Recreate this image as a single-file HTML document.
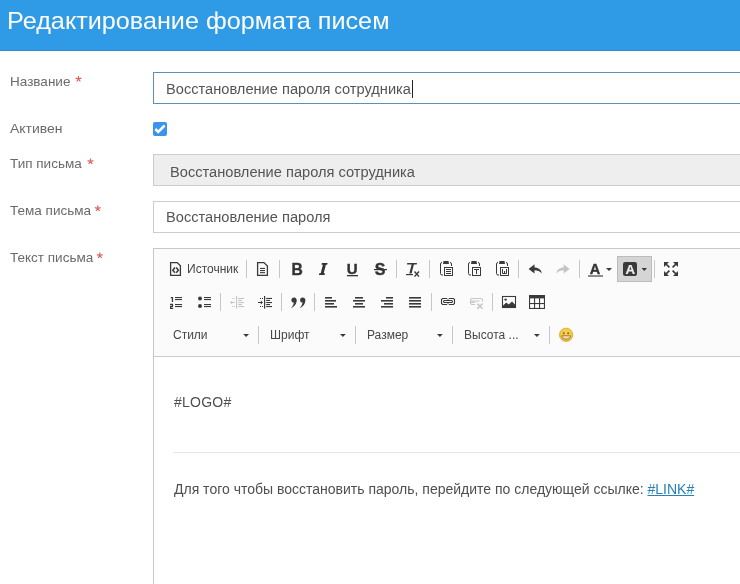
<!DOCTYPE html>
<html><head><meta charset="utf-8">
<style>
*{box-sizing:border-box;margin:0;padding:0}
html,body{width:740px;height:584px;overflow:hidden;background:#fff;font-family:"Liberation Sans",sans-serif}
.abs{position:absolute;will-change:transform}
#hdr{left:0;top:0;width:740px;height:50px;background:#2f9ae6}
#title{left:7px;top:6px;font-size:24px;color:#fff;white-space:nowrap;line-height:30px;transform:scaleX(1.05);transform-origin:0 0}
.lbl{left:10px;font-size:13px;color:#6a6a6a;white-space:nowrap;line-height:16px;transform:scaleX(1.04);transform-origin:0 0}
.ast{font-size:15px;color:#e05a5a;line-height:16px}
.inp{left:153px;width:600px;height:32px;border:1px solid #cccccc;background:#fff}
.itxt{font-size:14px;color:#555;white-space:nowrap;line-height:16px;transform:scaleX(1.045);transform-origin:0 0}
#ed{left:153px;top:248px;width:600px;height:340px;border:1px solid #c8c8c8;background:#fff}
#tb{left:0;top:0;width:600px;height:108px;background:#fbfbfb;border-bottom:1px solid #cbcbcb}
.tt{font-size:12px;color:#474747;white-space:nowrap;line-height:14px}
.ct{font-size:14px;color:#4f4f4f;white-space:nowrap;line-height:16px}
svg{position:absolute;left:0;top:0;will-change:transform}
</style></head><body>
<div id="hdr" class="abs"></div><div class="abs" style="left:0;top:50px;width:740px;height:1px;background:#4288bd"></div><div class="abs" style="left:0;top:51px;width:740px;height:1px;background:#eefcff"></div>
<div id="title" class="abs">Редактирование формата писем</div>

<div class="abs lbl" style="top:74px">Название</div>
<div class="abs lbl" style="top:121px;transform:scaleX(1.075)">Активен</div>
<div class="abs lbl" style="top:156px">Тип письма</div>
<div class="abs lbl" style="top:203px">Тема письма</div>
<div class="abs lbl" style="top:250px">Текст письма</div>

<div class="abs inp" style="top:72px;border-color:#5f8fb8"></div>
<div class="abs itxt" style="left:166px;top:81px">Восстановление пароля сотрудника</div>
<div class="abs" style="left:412px;top:80px;width:1px;height:18px;background:#222"></div>

<div class="abs" style="left:153px;top:122px;width:14px;height:14px;background:#3a93ec;border-radius:2px"></div>

<div class="abs inp" style="top:154px;background:#eeeeee"></div>
<div class="abs itxt" style="left:170px;top:164px">Восстановление пароля сотрудника</div>

<div class="abs inp" style="top:201px"></div>
<div class="abs itxt" style="left:166px;top:209px">Восстановление пароля</div>

<div id="ed" class="abs">
  <div id="tb" class="abs"></div>
</div>
<div class="abs tt" style="left:187px;top:262px">Источник</div>
<div class="abs tt" style="left:173px;top:328px">Стили</div>
<div class="abs tt" style="left:270px;top:328px">Шрифт</div>
<div class="abs tt" style="left:367px;top:328px">Размер</div>
<div class="abs tt" style="left:464px;top:328px">Высота ...</div>

<div class="abs ct" style="left:174px;top:394px;letter-spacing:0.25px">#LOGO#</div>
<div class="abs" style="left:174px;top:452px;width:570px;height:1px;background:#e6e6e6"></div>
<div class="abs ct" style="left:174px;top:481px">Для того чтобы восстановить пароль, перейдите по следующей ссылке: <span style="color:#2581b6;text-decoration:underline">#LINK#</span></div>

<svg width="740" height="584" viewBox="0 0 740 584">
<g fill="none" stroke="#df5f5f" stroke-width="1.2"><path d="M78.5,79 V76 M78.5,79 L75.6,78.1 M78.5,79 L81.4,78.1 M78.5,79 L76.7,81.5 M78.5,79 L80.3,81.5"/><path d="M90.5,161.5 V158.5 M90.5,161.5 L87.6,160.6 M90.5,161.5 L93.4,160.6 M90.5,161.5 L88.7,164.0 M90.5,161.5 L92.3,164.0"/><path d="M97.8,208.5 V205.5 M97.8,208.5 L94.89999999999999,207.6 M97.8,208.5 L100.7,207.6 M97.8,208.5 L96.0,211.0 M97.8,208.5 L99.6,211.0"/><path d="M99.8,255.5 V252.5 M99.8,255.5 L96.89999999999999,254.6 M99.8,255.5 L102.7,254.6 M99.8,255.5 L98.0,258.0 M99.8,255.5 L101.6,258.0"/></g>

<g fill="none" stroke="#3a3a3a" stroke-width="1.3">
<!-- source -->
<path d="M170.6,262.6 H177.2 L180.4,265.8 V275.4 H170.6 Z"/>
<path d="M175,267.6 L172.8,270.2 L175,272.8 M176.2,267.6 L178.4,270.2 L176.2,272.8" stroke-width="1.5"/>
<!-- doc -->
<path d="M257.6,262.6 H264 L267.4,266 V275.4 H257.6 Z"/>
</g>
<g fill="#3a3a3a">
<rect x="260" y="267.9" width="5" height="1.1"/>
<rect x="260" y="270" width="5" height="1.1"/>
<rect x="260" y="272.1" width="5" height="1.1"/>
</g>
<g fill="#333">
<text x="0" y="0" transform="translate(291.6,274.8) scale(0.9,1)" font-family="Liberation Sans" font-weight="bold" font-size="17.4" stroke="#333" stroke-width="0.45">B</text>
<path d="M321.9,263 H327.6 L327.2,264.7 H325.9 L323.7,273.3 H325 L324.6,275 H318.9 L319.3,273.3 H320.7 L322.9,264.7 H321.5 Z"/>
<text x="346.8" y="274" font-family="Liberation Sans" font-weight="bold" font-size="15" stroke="#333" stroke-width="0.4">U</text>
<rect x="347" y="275" width="11" height="1.3"/>
<text x="374.8" y="274.5" font-family="Liberation Sans" font-weight="bold" font-size="16" stroke="#333" stroke-width="0.4">S</text>
<rect x="374" y="269" width="13" height="1.2"/>
</g>
<!-- Tx -->
<g fill="#3a3a3a">
<path d="M407.2,263 H417 L416.7,264.6 H413.9 L411.6,273.6 H409.3 L411.6,264.6 H407 Z"/>
<rect x="406" y="274" width="7" height="1.2"/>
</g>
<path d="M414.5,271.5 L419,276.6 M419,271.5 L414.5,276.6" stroke="#3a3a3a" stroke-width="1.4"/>
<g transform="translate(0,0)" fill="none" stroke="#3a3a3a" stroke-width="1">
<path d="M442,262.5 Q440.5,262.5 440.5,264 V273.5 Q440.5,275 442,275 H443"/>
<path d="M450,262.5 Q451.5,262.5 451.5,264 V266"/>
<path d="M443.5,261 H448.5 L449,264 H443 Z" fill="#3a3a3a" stroke="none"/>
<rect x="444.5" y="267.5" width="8" height="8" fill="#fbfbfb"/>
<path d="M446,269.5 H451 M446,271.5 H451 M446,273.5 H451"/>
</g>
<g transform="translate(28,0)" fill="none" stroke="#3a3a3a" stroke-width="1">
<path d="M442,262.5 Q440.5,262.5 440.5,264 V273.5 Q440.5,275 442,275 H443"/>
<path d="M450,262.5 Q451.5,262.5 451.5,264 V266"/>
<path d="M443.5,261 H448.5 L449,264 H443 Z" fill="#3a3a3a" stroke="none"/>
<rect x="444.5" y="267.5" width="8" height="8" fill="#fbfbfb"/>
<path d="M446,269.5 H451 M448.5,269.5 V274"/>
</g>
<g transform="translate(56,0)" fill="none" stroke="#3a3a3a" stroke-width="1">
<path d="M442,262.5 Q440.5,262.5 440.5,264 V273.5 Q440.5,275 442,275 H443"/>
<path d="M450,262.5 Q451.5,262.5 451.5,264 V266"/>
<path d="M443.5,261 H448.5 L449,264 H443 Z" fill="#3a3a3a" stroke="none"/>
<rect x="444.5" y="267.5" width="8" height="8" fill="#fbfbfb"/>
<path d="M446.5,269 V273.5 H450.5 V269 M448.5,271 V273.5"/>
</g>
<!-- undo redo -->
<path d="M528.6,268.9 L534.5,264.2 L534.5,267.4 C538.5,267.4 541.5,269.8 541.8,273.4 C540,271.2 537.5,270.2 534.5,270.2 L534.5,273.6 Z" fill="#3a3a3a"/>
<path d="M569.6,268.9 L563.7,264.2 L563.7,267.4 C559.7,267.4 556.7,269.8 556.4,273.4 C558.2,271.2 560.7,270.2 563.7,270.2 L563.7,273.6 Z" fill="#c4c4c4"/>
<!-- text color -->
<text x="589.8" y="273.5" font-family="Liberation Sans" font-weight="bold" font-size="14.5" fill="#333" stroke="#333" stroke-width="0.35">A</text>
<rect x="588" y="275" width="15" height="2" fill="#8c8c8c"/>
<path d="M606,268 H612 L609,271 Z" fill="#3a3a3a"/>
<!-- bg color -->
<rect x="617.5" y="256.5" width="34" height="25" fill="#d5d5d5" stroke="#bcbcbc"/>
<rect x="623" y="262" width="14" height="14" rx="2.2" fill="#3a3a3a"/>
<text x="625.4" y="273.6" font-family="Liberation Sans" font-weight="bold" font-size="13.3" fill="#eee" stroke="#eee" stroke-width="0.2">A</text>
<path d="M641.5,268 H647 L644.25,271 Z" fill="#3a3a3a"/>
<!-- maximize -->
<g fill="#3a3a3a">
<path d="M664,262 H669 L664,267 Z"/><path d="M678,262 H673 L678,267 Z"/>
<path d="M664,276 H669 L664,271 Z"/><path d="M678,276 H673 L678,271 Z"/>
</g>
<path d="M665.5,263.5 L669.4,267.4 M676.5,263.5 L672.6,267.4 M665.5,274.5 L669.4,270.6 M676.5,274.5 L672.6,270.6" stroke="#3a3a3a" stroke-width="1.7"/>
<!-- row2: numbered list -->
<g fill="#3a3a3a">
<rect x="170.8" y="297" width="2.2" height="1.2"/><rect x="171.8" y="297" width="1.3" height="5"/>
<path d="M170,303.8 H173.1 V306.9 H171.3 V307.7 H173.2 V309 H170 V305.7 H171.8 V305.1 H170 Z"/>
<rect x="175" y="297" width="7" height="1.1"/><rect x="175" y="299" width="7" height="1.1"/>
<rect x="175" y="304" width="7" height="1.1"/><rect x="175" y="306" width="7" height="1.1"/>
<circle cx="200" cy="298.6" r="2"/><circle cx="200" cy="305.9" r="2"/>
<rect x="204" y="297" width="7" height="1.1"/><rect x="204" y="299" width="7" height="1.1"/>
<rect x="204" y="304" width="7" height="1.1"/><rect x="204" y="306" width="7" height="1.1"/>
</g>
<!-- outdent (disabled) -->
<g fill="#c6c6c6">
<rect x="236" y="296" width="1.1" height="12.6"/>
<rect x="238.2" y="297.9" width="5.8" height="1.1"/><rect x="238.2" y="299.9" width="3.8" height="1.1"/>
<rect x="238.2" y="302" width="5.8" height="1.1"/><rect x="238.2" y="304" width="3.8" height="1.1"/>
<rect x="238.2" y="306" width="5.8" height="1.1"/>
<rect x="232" y="298" width="1" height="1"/><rect x="234" y="298" width="1" height="1"/>
<rect x="232" y="306" width="1" height="1"/><rect x="234" y="306" width="1" height="1"/>
<path d="M230,302.5 L232.2,300.4 V302 H234.8 V303 H232.2 V304.6 Z"/>
</g>
<!-- indent -->
<g fill="#3a3a3a">
<rect x="264" y="296" width="1.2" height="12.6"/>
<rect x="266.2" y="297.9" width="5.8" height="1.1"/><rect x="266.2" y="299.9" width="3.8" height="1.1"/>
<rect x="266.2" y="302" width="5.8" height="1.1"/><rect x="266.2" y="304" width="3.8" height="1.1"/>
<rect x="266.2" y="306" width="5.8" height="1.1"/>
<rect x="260" y="298" width="1" height="1"/><rect x="262" y="298" width="1" height="1"/>
<rect x="260" y="306" width="1" height="1"/><rect x="262" y="306" width="1" height="1"/>
<path d="M263,302.5 L260.8,300.4 V302 H258 V303 H260.8 V304.6 Z"/>
</g>
<!-- blockquote -->
<g fill="#3a3a3a">
<circle cx="294" cy="300" r="2.6"/>
<path d="M296.5,300 C296.8,303.8 294.6,306.6 291,308 C292.6,306.2 293.6,304.4 293.8,302.4 Z"/>
<circle cx="302.7" cy="300" r="2.6"/>
<path d="M305.2,300 C305.5,303.8 303.3,306.6 299.7,308 C301.3,306.2 302.3,304.4 302.5,302.4 Z"/>
</g>
<!-- align -->
<g fill="#3a3a3a">
<rect x="325" y="297" width="7" height="1.6"/><rect x="325" y="300" width="11" height="1.6"/>
<rect x="325" y="303" width="9" height="1.6"/><rect x="325" y="306" width="12" height="1.6"/>
<rect x="355" y="297" width="8" height="1.6"/><rect x="353" y="300" width="12" height="1.6"/>
<rect x="355" y="303" width="8" height="1.6"/><rect x="353" y="306" width="12" height="1.6"/>
<rect x="386" y="297" width="7" height="1.6"/><rect x="381" y="300" width="12" height="1.6"/>
<rect x="384" y="303" width="9" height="1.6"/><rect x="381" y="306" width="12" height="1.6"/>
<rect x="409" y="297" width="12" height="1.6"/><rect x="409" y="300" width="12" height="1.6"/>
<rect x="409" y="303" width="12" height="1.6"/><rect x="409" y="306" width="12" height="1.6"/>
</g>
<!-- link -->
<g fill="none" stroke="#3a3a3a" stroke-width="1.1">
<path d="M447.2,298.5 H442.6 L441.5,299.6 V303.4 L442.6,304.5 H447.2"/>
<path d="M448.8,298.5 H453.4 L454.5,299.6 V303.4 L453.4,304.5 H448.8"/>
<rect x="443.5" y="300.5" width="9" height="2" rx="1"/>
</g>
<rect x="447.5" y="299.2" width="1" height="1" fill="#3a3a3a"/><rect x="447.5" y="302.8" width="1" height="1" fill="#3a3a3a"/>
<!-- unlink -->
<g fill="none" stroke="#c8c8c8" stroke-width="1.1">
<path d="M481.4,298.5 H471.6 L470.5,299.6 V303.4 L471.6,304.5 H475.2"/>
<path d="M481.4,298.5 L482.5,299.6 V301.6"/>
<path d="M479.6,301 H472.2 Q471.5,301 471.5,301.7 Q471.5,302.4 472.2,302.4 H475.2"/>
<path d="M477.2,303.6 L482.6,308.6 M482.6,303.6 L477.2,308.6" stroke-width="1.5"/>
</g>
<!-- image -->
<rect x="502.5" y="296.5" width="13" height="11" fill="#fff" stroke="#3a3a3a" stroke-width="1.1"/>
<circle cx="505.6" cy="299.6" r="1.2" fill="#3a3a3a"/>
<path d="M503,307.5 V305.4 L506.4,302.6 L508.6,304.6 L512,301.4 L515,304.4 V307.5 Z" fill="#3a3a3a"/>
<!-- table -->
<rect x="529" y="295" width="16" height="14" fill="#fff"/>
<g fill="#3a3a3a">
<rect x="529" y="295" width="16" height="3.4"/>
<rect x="529" y="295" width="1.1" height="14"/><rect x="543.9" y="295" width="1.1" height="14"/>
<rect x="534" y="298" width="1.1" height="11"/><rect x="539" y="298" width="1.1" height="11"/>
<rect x="529" y="303" width="16" height="1.1"/><rect x="529" y="307.9" width="16" height="1.1"/>
</g>
<!-- combo arrows -->
<g fill="#3a3a3a">
<path d="M243.2,334 H249 L246.1,337 Z"/>
<path d="M340,334 H345.8 L342.9,337 Z"/>
<path d="M437,334 H442.8 L439.9,337 Z"/>
<path d="M534,334 H539.8 L536.9,337 Z"/>
</g>
<!-- smiley -->
<defs><radialGradient id="sg" cx="0.5" cy="0.4" r="0.65"><stop offset="0" stop-color="#fbd85a"/><stop offset="0.75" stop-color="#f2c23a"/><stop offset="1" stop-color="#dca42c"/></radialGradient></defs>
<circle cx="566.1" cy="334.8" r="6.7" fill="url(#sg)" stroke="#d9a33a" stroke-width="0.7"/>
<circle cx="563.9" cy="333.3" r="1" fill="#8a6418"/>
<circle cx="568.1" cy="333.3" r="1" fill="#8a6418"/>
<path d="M561.4,335.9 Q566.1,335.2 570.8,335.9 Q570.2,339.4 566.1,339.4 Q562,339.4 561.4,335.9 Z" fill="#e8d8a4" stroke="#9a7320" stroke-width="0.8"/>
<!-- checkbox tick -->
<path d="M155.3,129 L158.2,131.9 L164.6,125.5" fill="none" stroke="#fff" stroke-width="2.5"/>
<!-- separators row1 -->
<g fill="#c7c7c7">
<rect x="246" y="260" width="1" height="18"/>
<rect x="279" y="260" width="1" height="18"/>
<rect x="396" y="260" width="1" height="18"/>
<rect x="429" y="260" width="1" height="18"/>
<rect x="518" y="260" width="1" height="18"/>
<rect x="579" y="260" width="1" height="18"/>
<rect x="654" y="260" width="1" height="18"/>
<!-- row2 -->
<rect x="220" y="293" width="1" height="18"/>
<rect x="281" y="293" width="1" height="18"/>
<rect x="314" y="293" width="1" height="18"/>
<rect x="431" y="293" width="1" height="18"/>
<rect x="492" y="293" width="1" height="18"/>
<!-- row3 -->
<rect x="258" y="326" width="1" height="18"/>
<rect x="355" y="326" width="1" height="18"/>
<rect x="452" y="326" width="1" height="18"/>
<rect x="549" y="326" width="1" height="18"/>
</g>
</svg>
</body></html>
